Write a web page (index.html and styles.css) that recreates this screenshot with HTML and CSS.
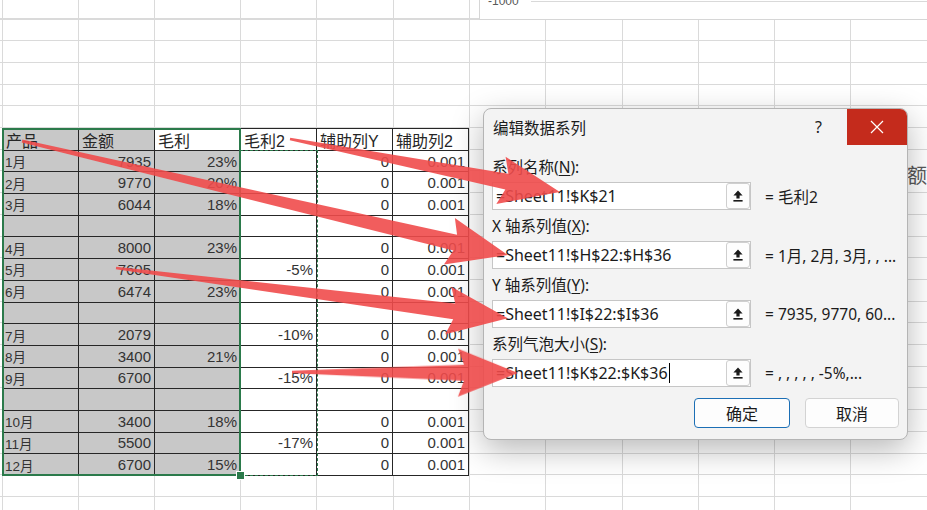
FILE: index.html
```html
<!DOCTYPE html>
<html lang="zh-CN">
<head>
    <meta charset="UTF-8">
    <meta name="viewport" content="width=device-width, initial-scale=1.0">
    <title>编辑数据系列</title>
    <link rel="stylesheet" href="styles.css">
</head>
<body>
    <div class="sheet">
        <div class="range">
            <div class="data-grid">
                <!-- Header -->
                <div class="cell head shade">产品</div>
                <div class="cell head shade">金额</div>
                <div class="cell head">毛利</div>
                <div class="cell head">毛利2</div>
                <div class="cell head">辅助列Y</div>
                <div class="cell head">辅助列2</div>

                <div class="cell month shade">1月</div>
                <div class="cell num shade">7935</div>
                <div class="cell num shade">23%</div>
                <div class="cell num"></div>
                <div class="cell num">0</div>
                <div class="cell num">0.001</div>

                <div class="cell month shade">2月</div>
                <div class="cell num shade">9770</div>
                <div class="cell num shade">20%</div>
                <div class="cell num"></div>
                <div class="cell num">0</div>
                <div class="cell num">0.001</div>

                <div class="cell month shade">3月</div>
                <div class="cell num shade">6044</div>
                <div class="cell num shade">18%</div>
                <div class="cell num"></div>
                <div class="cell num">0</div>
                <div class="cell num">0.001</div>

                <div class="cell shade"></div>
                <div class="cell shade"></div>
                <div class="cell shade"></div>
                <div class="cell"></div>
                <div class="cell"></div>
                <div class="cell"></div>

                <div class="cell month shade">4月</div>
                <div class="cell num shade">8000</div>
                <div class="cell num shade">23%</div>
                <div class="cell num"></div>
                <div class="cell num">0</div>
                <div class="cell num">0.001</div>

                <div class="cell month shade">5月</div>
                <div class="cell num shade">7605</div>
                <div class="cell num shade"></div>
                <div class="cell num">-5%</div>
                <div class="cell num">0</div>
                <div class="cell num">0.001</div>

                <div class="cell month shade">6月</div>
                <div class="cell num shade">6474</div>
                <div class="cell num shade">23%</div>
                <div class="cell num"></div>
                <div class="cell num">0</div>
                <div class="cell num">0.001</div>

                <div class="cell shade"></div>
                <div class="cell shade"></div>
                <div class="cell shade"></div>
                <div class="cell"></div>
                <div class="cell"></div>
                <div class="cell"></div>

                <div class="cell month shade">7月</div>
                <div class="cell num shade">2079</div>
                <div class="cell num shade"></div>
                <div class="cell num">-10%</div>
                <div class="cell num">0</div>
                <div class="cell num">0.001</div>

                <div class="cell month shade">8月</div>
                <div class="cell num shade">3400</div>
                <div class="cell num shade">21%</div>
                <div class="cell num"></div>
                <div class="cell num">0</div>
                <div class="cell num">0.001</div>

                <div class="cell month shade">9月</div>
                <div class="cell num shade">6700</div>
                <div class="cell num shade"></div>
                <div class="cell num">-15%</div>
                <div class="cell num">0</div>
                <div class="cell num">0.001</div>

                <div class="cell shade"></div>
                <div class="cell shade"></div>
                <div class="cell shade"></div>
                <div class="cell"></div>
                <div class="cell"></div>
                <div class="cell"></div>

                <div class="cell month shade">10月</div>
                <div class="cell num shade">3400</div>
                <div class="cell num shade">18%</div>
                <div class="cell num"></div>
                <div class="cell num">0</div>
                <div class="cell num">0.001</div>

                <div class="cell month shade">11月</div>
                <div class="cell num shade">5500</div>
                <div class="cell num shade"></div>
                <div class="cell num">-17%</div>
                <div class="cell num">0</div>
                <div class="cell num">0.001</div>

                <div class="cell month shade">12月</div>
                <div class="cell num shade">6700</div>
                <div class="cell num shade">15%</div>
                <div class="cell num"></div>
                <div class="cell num">0</div>
                <div class="cell num">0.001</div>
            </div>

            <!-- Selection and copy range -->
            <div class="selection"></div>
            <div class="copy-range"></div>
            <div class="fill-handle"></div>
        </div>
    </div>

    <!-- Chart objects behind the dialog -->
    <div class="chart-stub">
        <span class="axis-label">-1000</span>
        <span class="axis-line"></span>
    </div>
    <div class="chart-title">额</div>

    <!-- Edit series dialog -->
    <div class="dialog">
        <div class="dialog-titlebar">
            <span class="dialog-title">编辑数据系列</span>
            <span class="dialog-help">?</span>
            <button class="dialog-close">
                <svg width="14" height="14" viewBox="0 0 14 14">
                    <path d="M1 1 L13 13 M13 1 L1 13" stroke="#fff" stroke-width="1.2" fill="none"/>
                </svg>
            </button>
        </div>
        <div class="dialog-body">
            <div class="field">
                <div class="field-label">系列名称(<u>N</u>):</div>
                <div class="field-row">
                    <div class="ref-input">
                        <span class="ref-text">=Sheet11!$K$21</span>
                        <span class="ref-picker">
                            <svg width="10" height="12" viewBox="0 0 10 12"><path d="M5 0.5 L9.6 5.6 H6.6 V8.4 H3.4 V5.6 H0.4 Z"/><rect x="0.4" y="10" width="9.2" height="1.6"/></svg>
                        </span>
                    </div>
                    <span class="ref-value">= 毛利2</span>
                </div>
            </div>
            <div class="field">
                <div class="field-label">X 轴系列值(<u>X</u>):</div>
                <div class="field-row">
                    <div class="ref-input">
                        <span class="ref-text">=Sheet11!$H$22:$H$36</span>
                        <span class="ref-picker">
                            <svg width="10" height="12" viewBox="0 0 10 12"><path d="M5 0.5 L9.6 5.6 H6.6 V8.4 H3.4 V5.6 H0.4 Z"/><rect x="0.4" y="10" width="9.2" height="1.6"/></svg>
                        </span>
                    </div>
                    <span class="ref-value">= 1月, 2月, 3月, , ...</span>
                </div>
            </div>
            <div class="field">
                <div class="field-label">Y 轴系列值(<u>Y</u>):</div>
                <div class="field-row">
                    <div class="ref-input">
                        <span class="ref-text">=Sheet11!$I$22:$I$36</span>
                        <span class="ref-picker">
                            <svg width="10" height="12" viewBox="0 0 10 12"><path d="M5 0.5 L9.6 5.6 H6.6 V8.4 H3.4 V5.6 H0.4 Z"/><rect x="0.4" y="10" width="9.2" height="1.6"/></svg>
                        </span>
                    </div>
                    <span class="ref-value">= 7935, 9770, 60...</span>
                </div>
            </div>
            <div class="field">
                <div class="field-label">系列气泡大小(<u>S</u>):</div>
                <div class="field-row">
                    <div class="ref-input">
                        <span class="ref-text">=Sheet11!$K$22:$K$36<span class="caret"></span></span>
                        <span class="ref-picker">
                            <svg width="10" height="12" viewBox="0 0 10 12"><path d="M5 0.5 L9.6 5.6 H6.6 V8.4 H3.4 V5.6 H0.4 Z"/><rect x="0.4" y="10" width="9.2" height="1.6"/></svg>
                        </span>
                    </div>
                    <span class="ref-value">= , , , , , -5%,...</span>
                </div>
            </div>
            <div class="dialog-buttons">
                <button class="btn btn-primary">确定</button>
                <button class="btn">取消</button>
            </div>
        </div>
    </div>

    <!-- Annotation arrows -->
    <svg class="arrows" width="927" height="510" viewBox="0 0 927 510">
        <g fill="#f04b4b" opacity="0.9">
            <polygon transform="translate(290 139) rotate(11.1)" points="0,-1.2 221,-8 215,-24 275,0 215,24 221,8 0,1.2"/>
            <polygon transform="translate(22 141) rotate(13.2)" points="0,-1.5 445,-8 439,-24 499,0 439,24 445,8 0,1.5"/>
            <polygon transform="translate(116 268) rotate(7.3)" points="0,-1.2 341,-8 335,-24 395,0 335,24 341,8 0,1.2"/>
            <polygon transform="translate(292 372) rotate(0.25)" points="0,-1.2 172,-8 166,-24 226,0 166,24 172,8 0,1.2"/>
        </g>
    </svg>
</body>
</html>
```

FILE: styles.css
```css
/* Sheet background with gridlines */
body {
    margin: 0;
    width: 927px;
    height: 510px;
    overflow: hidden;
    position: relative;
    font-family: "Liberation Sans", "Noto Sans CJK SC", sans-serif;
    background-color: #fff;
    background-image:
        repeating-linear-gradient(90deg, #dadada 0 1px, transparent 1px 76px),
        repeating-linear-gradient(90deg, #dadada 0 1px, transparent 1px 76.3px),
        repeating-linear-gradient(180deg, transparent 0 18.5px, #dadada 18.5px 19.5px, transparent 19.5px 21.7px);
    background-position: 2px 0, 240px 0, 0 0;
    background-size: 153px 100%, 700px 100%, 100% 100%;
    background-repeat: no-repeat;
}

.sheet {
    padding: 128px 0 0 2px;
}

.range {
    position: relative;
    display: inline-block;
}

.data-grid {
    display: grid;
    grid-template-columns: 76px 76px 86px 76px 76px 76px;
    grid-auto-rows: 21.7px;
    border-top: 1px solid #262626;
    border-left: 1px solid #262626;
}

.cell {
    box-sizing: border-box;
    border-right: 1px solid #262626;
    border-bottom: 1px solid #262626;
    background: #fff;
    padding: 0 3px;
    display: flex;
    align-items: center;
    font-size: 15px;
    color: #333;
    white-space: nowrap;
}

.cell.head {
    font-size: 16px;
    color: #262626;
    padding-top: 1px;
}

.cell.month {
    font-size: 13.5px;
    padding-left: 2px;
}

.cell.num {
    justify-content: flex-end;
}

.cell.shade {
    background: #c8c8c8;
}

/* Selection box, copy marquee, fill handle */
.selection {
    position: absolute;
    left: 0;
    top: 0;
    width: 239px;
    height: 348px;
    box-sizing: border-box;
    border: 2px solid #2b7a4b;
    pointer-events: none;
}

.copy-range {
    position: absolute;
    left: 238px;
    top: 22px;
    width: 78px;
    height: 326px;
    box-sizing: border-box;
    border: 1.5px dashed #2b7a4b;
}

.fill-handle {
    position: absolute;
    left: 234px;
    top: 343px;
    width: 7px;
    height: 7px;
    background: #2b7a4b;
    border: 1px solid #fff;
}

/* Chart pieces */
.chart-stub {
    position: absolute;
    left: 479px;
    top: -12px;
    width: 460px;
    height: 32px;
    box-sizing: border-box;
    background: #fff;
    border: 1px solid #d6d6d6;
    display: flex;
    align-items: flex-start;
    padding-top: 5px;
}

.axis-label {
    font-size: 12px;
    line-height: 14px;
    color: #595959;
    margin-left: 8px;
}

.axis-line {
    flex: 1;
    height: 1px;
    background: #d9d9d9;
    margin: 7px 0 0 12px;
}

.chart-title {
    position: absolute;
    left: 907px;
    top: 163px;
    font-size: 20px;
    line-height: 24px;
    color: #595959;
    font-family: "Noto Sans CJK SC", sans-serif;
}

/* Dialog */
.dialog {
    position: absolute;
    left: 483px;
    top: 108px;
    width: 425px;
    height: 332px;
    box-sizing: border-box;
    background: #f3f3f3;
    border: 1px solid #b4b4b4;
    border-radius: 8px;
    overflow: hidden;
    box-shadow: 0 10px 32px rgba(0, 0, 0, 0.28);
    font-family: "Noto Sans", "Noto Sans CJK SC", sans-serif;
    color: #1b1b1b;
}

.dialog-titlebar {
    display: flex;
    align-items: center;
    height: 36px;
}

.dialog-title {
    flex: 1;
    padding-left: 9px;
    font-size: 15.5px;
}

.dialog-help {
    font-size: 16px;
    margin-right: 25px;
}

.dialog-close {
    width: 60px;
    height: 36px;
    border: none;
    background: #c42b1c;
    display: flex;
    align-items: center;
    justify-content: center;
    padding: 0;
}

.dialog-body {
    padding: 12px 8px 0 8px;
}

.field {
    margin-bottom: 6px;
}

.field-label {
    font-size: 15.5px;
    line-height: 20px;
    margin-bottom: 5px;
}

.field-label u {
    text-underline-offset: 2px;
}

.field-row {
    display: flex;
    align-items: center;
}

.ref-input {
    width: 259px;
    height: 28px;
    box-sizing: border-box;
    background: #fff;
    border: 1px solid #c6c6c6;
    display: flex;
    align-items: center;
}

.ref-text {
    flex: 1;
    padding-left: 3px;
    font-size: 16px;
    white-space: nowrap;
    display: flex;
    align-items: center;
}

.caret {
    display: inline-block;
    width: 1px;
    height: 20px;
    background: #000;
    margin-left: 1px;
}

.ref-picker {
    width: 24px;
    height: 26px;
    box-sizing: border-box;
    border: 1px solid #cfcfcf;
    border-radius: 3px;
    background: #fdfdfd;
    display: flex;
    align-items: center;
    justify-content: center;
}

.ref-picker svg {
    fill: #1b1b1b;
}

.ref-value {
    margin-left: 14px;
    font-size: 15.5px;
    white-space: nowrap;
}

.dialog-buttons {
    display: flex;
    justify-content: flex-end;
    gap: 15px;
    margin-top: 11px;
}

.btn {
    width: 94px;
    height: 30px;
    background: #fdfdfd;
    border: 1px solid #d3d3d3;
    border-radius: 4px;
    font-family: "Noto Sans CJK SC", sans-serif;
    font-size: 16px;
    color: #1b1b1b;
}

.btn-primary {
    width: 96px;
    border-color: #1c6fb5;
}

/* Annotation layer */
.arrows {
    position: absolute;
    left: 0;
    top: 0;
    pointer-events: none;
}
```
